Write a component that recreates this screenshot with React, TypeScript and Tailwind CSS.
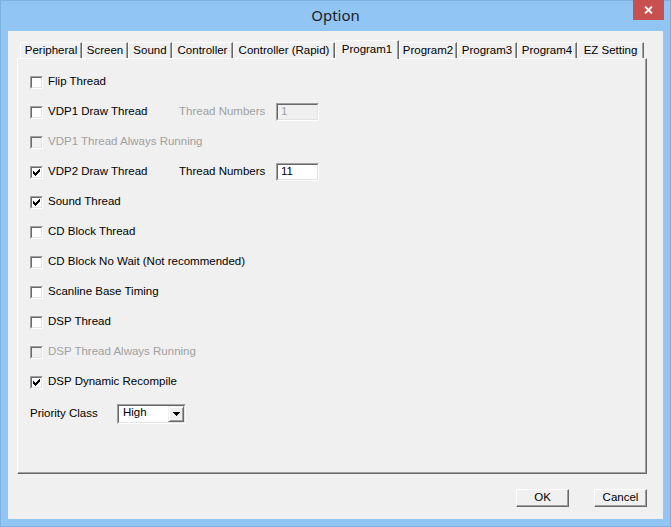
import React from "react";

const FONT = "font-['Liberation_Sans',Arial,sans-serif]";

function Check() {
  return (
    <svg width="7" height="7" viewBox="0 0 7 7" shapeRendering="crispEdges">
      <path d="M0 2h1v3H0zM1 3h1v3H1zM2 4h1v3H2zM3 3h1v3H3zM4 2h1v3H4zM5 1h1v3H5zM6 0h1v3H6z" fill="#000" />
    </svg>
  );
}

function CheckBox({ checked, disabled }: { checked?: boolean; disabled?: boolean }) {
  return (
    <div className="w-[13px] h-[13px] shrink-0 border border-t-[#a0a0a0] border-l-[#a0a0a0] border-b-white border-r-white">
      <div
        className={`w-full h-full border border-t-[#696969] border-l-[#696969] border-b-[#e3e3e3] border-r-[#e3e3e3] flex items-center justify-center ${
          disabled ? "bg-[#f0f0f0]" : "bg-white"
        }`}
      >
        {checked && <Check />}
      </div>
    </div>
  );
}

function NumInput({ value, disabled }: { value: string; disabled?: boolean }) {
  return (
    <div className="w-[43px] h-[18px] border border-t-[#a0a0a0] border-l-[#a0a0a0] border-b-white border-r-white">
      <div
        className={`w-full h-full border border-t-[#696969] border-l-[#696969] border-b-[#e3e3e3] border-r-[#e3e3e3] flex items-center pl-[3px] text-[11.5px] leading-none ${
          disabled ? "bg-[#f0f0f0] text-[#a0a0a0]" : "bg-white text-black"
        }`}
      >
        {value}
      </div>
    </div>
  );
}

type Row = {
  label: string;
  checked?: boolean;
  disabled?: boolean;
  extra?: { value: string; disabled?: boolean };
};

const rows: Row[] = [
  { label: "Flip Thread" },
  { label: "VDP1 Draw Thread", extra: { value: "1", disabled: true } },
  { label: "VDP1 Thread Always Running", disabled: true },
  { label: "VDP2 Draw Thread", checked: true, extra: { value: "11" } },
  { label: "Sound Thread", checked: true },
  { label: "CD Block Thread" },
  { label: "CD Block No Wait (Not recommended)" },
  { label: "Scanline Base Timing" },
  { label: "DSP Thread" },
  { label: "DSP Thread Always Running", disabled: true },
  { label: "DSP Dynamic Recompile", checked: true },
];

const tabs: { label: string; w: string; sel?: boolean }[] = [
  { label: "Peripheral", w: "w-[62px]" },
  { label: "Screen", w: "w-[46px]" },
  { label: "Sound", w: "w-[44px]" },
  { label: "Controller", w: "w-[61px]" },
  { label: "Controller (Rapid)", w: "w-[102px]" },
  { label: "Program1", w: "w-[64px]", sel: true },
  { label: "Program2", w: "w-[58px]" },
  { label: "Program3", w: "w-[60px]" },
  { label: "Program4", w: "w-[60px]" },
  { label: "EZ Setting", w: "w-[67px]" },
];

function Button({ label }: { label: string }) {
  return (
    <div className="w-[53px] h-[18px] bg-[#f0f0f0] border border-t-white border-l-white border-b-[#696969] border-r-[#696969] shadow-[inset_-1px_-1px_0_#a0a0a0] flex items-center justify-center text-[11.5px] leading-none text-black">
      {label}
    </div>
  );
}

export default function App() {
  return (
    <div className={`w-[671px] h-[527px] bg-[#90c5f4] border border-[#7fb0e0] flex flex-col ${FONT}`}>
      {/* Title bar */}
      <div className="h-[30px] grid grid-cols-[1fr_auto_1fr] items-start">
        <div />
        <div className="h-[30px] flex items-center pb-[1px] text-[15px] text-[#1e1e1e] font-['Noto_Sans',sans-serif]">
          Option
        </div>
        <div className="flex justify-end pr-[6px] -mt-[1px]">
          <div className="w-[31px] h-[20px] bg-[#c75050] flex items-center justify-center">
            <svg width="9" height="8" viewBox="0 0 9 8">
              <path d="M1 0.5 L8 7.5 M8 0.5 L1 7.5" stroke="#fff" strokeWidth="1.8" />
            </svg>
          </div>
        </div>
      </div>

      {/* Client area */}
      <div className="mx-[7px] mb-[7px] flex-1 bg-[#f0f0f0] flex flex-col pt-[9px]">
        {/* Tabs */}
        <div className="flex items-end pl-[12px] h-[18px] relative z-10">
          {tabs.map((t) =>
            t.sel ? (
              <div
                key={t.label}
                className={`${t.w} h-[19px] -mb-[1px] bg-[#f0f0f0] border-t border-l border-white border-r border-r-[#696969] shadow-[inset_-1px_0_0_#a0a0a0] rounded-tl-[2px] flex items-start justify-center pt-[1px] text-[11.5px] leading-[14px] text-black`}
              >
                {t.label}
              </div>
            ) : (
              <div
                key={t.label}
                className={`${t.w} h-[16px] bg-[#f0f0f0] border-t border-l border-white border-r border-r-[#696969] shadow-[inset_-1px_0_0_#a0a0a0] rounded-tl-[2px] flex items-center justify-center text-[11.5px] leading-none text-black`}
              >
                {t.label}
              </div>
            )
          )}
        </div>

        {/* Panel */}
        <div className="ml-[9px] w-[630px] h-[416px] border border-t-white border-l-white border-b-[#696969] border-r-[#696969] shadow-[inset_-1px_-1px_0_#a0a0a0] flex flex-col pt-[8px] pl-[12px]">
          {rows.map((r) => (
            <div key={r.label} className="h-[30px] flex items-center">
              <div className="w-[149px] flex items-center gap-[5px] whitespace-nowrap">
                <CheckBox checked={r.checked} disabled={r.disabled} />
                <span
                  className={`text-[11.5px] leading-none ${r.disabled ? "text-[#a0a0a0]" : "text-black"}`}
                >
                  {r.label}
                </span>
              </div>
              {r.extra && (
                <>
                  <span
                    className={`w-[97px] text-[11.5px] leading-none ${
                      r.extra.disabled ? "text-[#a0a0a0]" : "text-black"
                    }`}
                  >
                    Thread Numbers
                  </span>
                  <NumInput value={r.extra.value} disabled={r.extra.disabled} />
                </>
              )}
            </div>
          ))}
          <div className="h-[34px] flex items-center">
            <span className="w-[87px] text-[11.5px] leading-none text-black">Priority Class</span>
            <div className="w-[69px] h-[20px] border border-t-[#a0a0a0] border-l-[#a0a0a0] border-b-white border-r-white">
              <div className="w-full h-full border border-t-[#696969] border-l-[#696969] border-b-[#e3e3e3] border-r-[#e3e3e3] bg-white flex items-center justify-between">
                <span className="pl-[4px] text-[11.5px] leading-none text-black -mt-[2px]">High</span>
                <div className="w-[16px] h-[16px] bg-[#f0f0f0] border border-t-[#f0f0f0] border-l-[#f0f0f0] border-b-[#696969] border-r-[#696969] shadow-[inset_1px_1px_0_#fff,inset_-1px_-1px_0_#a0a0a0] flex items-center justify-center">
                  <svg width="7" height="4" viewBox="0 0 7 4" shapeRendering="crispEdges">
                    <path d="M0 0h7v1H0zM1 1h5v1H1zM2 2h3v1H2zM3 3h1v1H3z" fill="#000" />
                  </svg>
                </div>
              </div>
            </div>
          </div>
        </div>

        {/* Buttons */}
        <div className="mt-[15px] flex justify-end gap-[25px] pr-[16px]">
          <Button label="OK" />
          <Button label="Cancel" />
        </div>
      </div>
    </div>
  );
}
